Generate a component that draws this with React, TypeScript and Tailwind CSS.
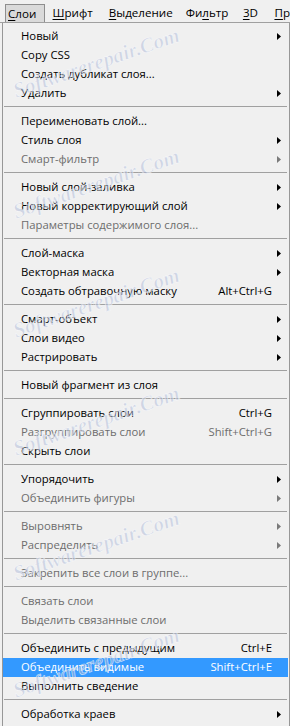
import React from "react";

type Item =
  | { sep: true }
  | { label: string; shortcut?: string; sub?: boolean; disabled?: boolean; active?: boolean; sep?: false };

const items: Item[] = [
  { label: "Новый", sub: true },
  { label: "Copy CSS" },
  { label: "Создать дубликат слоя..." },
  { label: "Удалить", sub: true },
  { sep: true },
  { label: "Переименовать слой..." },
  { label: "Стиль слоя", sub: true },
  { label: "Смарт-фильтр", sub: true, disabled: true },
  { sep: true },
  { label: "Новый слой-заливка", sub: true },
  { label: "Новый корректирующий слой", sub: true },
  { label: "Параметры содержимого слоя...", disabled: true },
  { sep: true },
  { label: "Слой-маска", sub: true },
  { label: "Векторная маска", sub: true },
  { label: "Создать обтравочную маску", shortcut: "Alt+Ctrl+G" },
  { sep: true },
  { label: "Смарт-объект", sub: true },
  { label: "Слои видео", sub: true },
  { label: "Растрировать", sub: true },
  { sep: true },
  { label: "Новый фрагмент из слоя" },
  { sep: true },
  { label: "Сгруппировать слои", shortcut: "Ctrl+G" },
  { label: "Разгруппировать слои", shortcut: "Shift+Ctrl+G", disabled: true },
  { label: "Скрыть слои" },
  { sep: true },
  { label: "Упорядочить", sub: true },
  { label: "Объединить фигуры", sub: true, disabled: true },
  { sep: true },
  { label: "Выровнять", sub: true, disabled: true },
  { label: "Распределить", sub: true, disabled: true },
  { sep: true },
  { label: "Закрепить все слои в группе...", disabled: true },
  { sep: true },
  { label: "Связать слои", disabled: true },
  { label: "Выделить связанные слои", disabled: true },
  { sep: true },
  { label: "Объединить с предыдущим", shortcut: "Ctrl+E" },
  { label: "Объединить видимые", shortcut: "Shift+Ctrl+E", active: true },
  { label: "Выполнить сведение" },
  { sep: true },
  { label: "Обработка краев", sub: true },
];

function Arrow({ color }: { color: string }) {
  return (
    <svg width="4" height="7" viewBox="0 0 4 7" className="block">
      <polygon points="0,0 4,3.5 0,7" fill={color} />
    </svg>
  );
}

const watermarkTops = [32, 153, 272, 390, 515, 632];

export default function App() {
  return (
    <div
      className="relative w-[290px] h-[726px] overflow-hidden bg-[#f0f0f0] text-[11.3px] text-black"
      style={{ fontFamily: '"Open Sans", "Noto Sans", "Liberation Sans", sans-serif' }}
    >
      {/* Menu bar */}
      <div className="flex h-[23px] items-end border-b border-[#a0a0a0] pl-[5px] whitespace-nowrap text-[11.6px]">
        <div className="h-[18px] w-[40px] border border-b-0 border-[#8e8e8e] bg-[#dadada] pl-[2px] leading-[17px]">
          <span className="underline underline-offset-2">С</span>лои
        </div>
        <div className="ml-[8px] h-[18px] w-[57px] leading-[17px]">
          <span className="underline underline-offset-2">Ш</span>рифт
        </div>
        <div className="h-[18px] w-[78px] leading-[17px]">
          <span className="underline underline-offset-2">В</span>ыделение
        </div>
        <div className="h-[18px] w-[58px] leading-[17px]">
          Фи<span className="underline underline-offset-2">л</span>ьтр
        </div>
        <div className="h-[18px] w-[32px] leading-[17px]">
          <span className="underline underline-offset-2">3</span>D
        </div>
        <div className="h-[18px] leading-[17px]">
          <span className="underline underline-offset-2">П</span>р
        </div>
      </div>

      {/* Dropdown */}
      <div className="ml-[2px] w-[288px] h-[703px] border-l border-r border-[#979797] bg-[#f0f0f0] pt-[4px]">
        {items.map((it, i) => {
          if (it.sep) {
            return (
              <div key={i} className="h-[9px] pt-[3px] pl-[1px] pr-[2px]">
                <div className="h-px bg-[#a0a0a0]" />
              </div>
            );
          }
          const color = it.active ? "text-white" : it.disabled ? "text-[#6d6d6d]" : "text-black";
          const arrowColor = it.active ? "#ffffff" : it.disabled ? "#7a7a7a" : "#000000";
          return (
            <div
              key={i}
              className={`flex h-[19px] items-center mr-[1px] pl-[18px] whitespace-nowrap ${color} ${
                it.active ? "bg-[#3399ff]" : ""
              }`}
            >
              <span className="flex-1">{it.label}</span>
              {it.shortcut && <span>{it.shortcut}</span>}
              <span className="flex w-[16px] pl-[5px] items-center">
                {it.sub && <Arrow color={arrowColor} />}
              </span>
            </div>
          );
        })}
      </div>

      {/* Watermarks */}
      {watermarkTops.map((t) => (
        <span
          key={t}
          className="pointer-events-none absolute left-[14px] text-[21px] font-bold italic text-[#aebbd8]/50 whitespace-nowrap"
          style={{
            top: t + 44,
            transform: "rotate(-19deg)",
            transformOrigin: "left center",
            fontFamily: '"Liberation Serif", serif',
            WebkitTextStroke: "0.6px rgba(255,255,255,0.7)",
          }}
        >
          Softwarerepair.Com
        </span>
      ))}
    </div>
  );
}
